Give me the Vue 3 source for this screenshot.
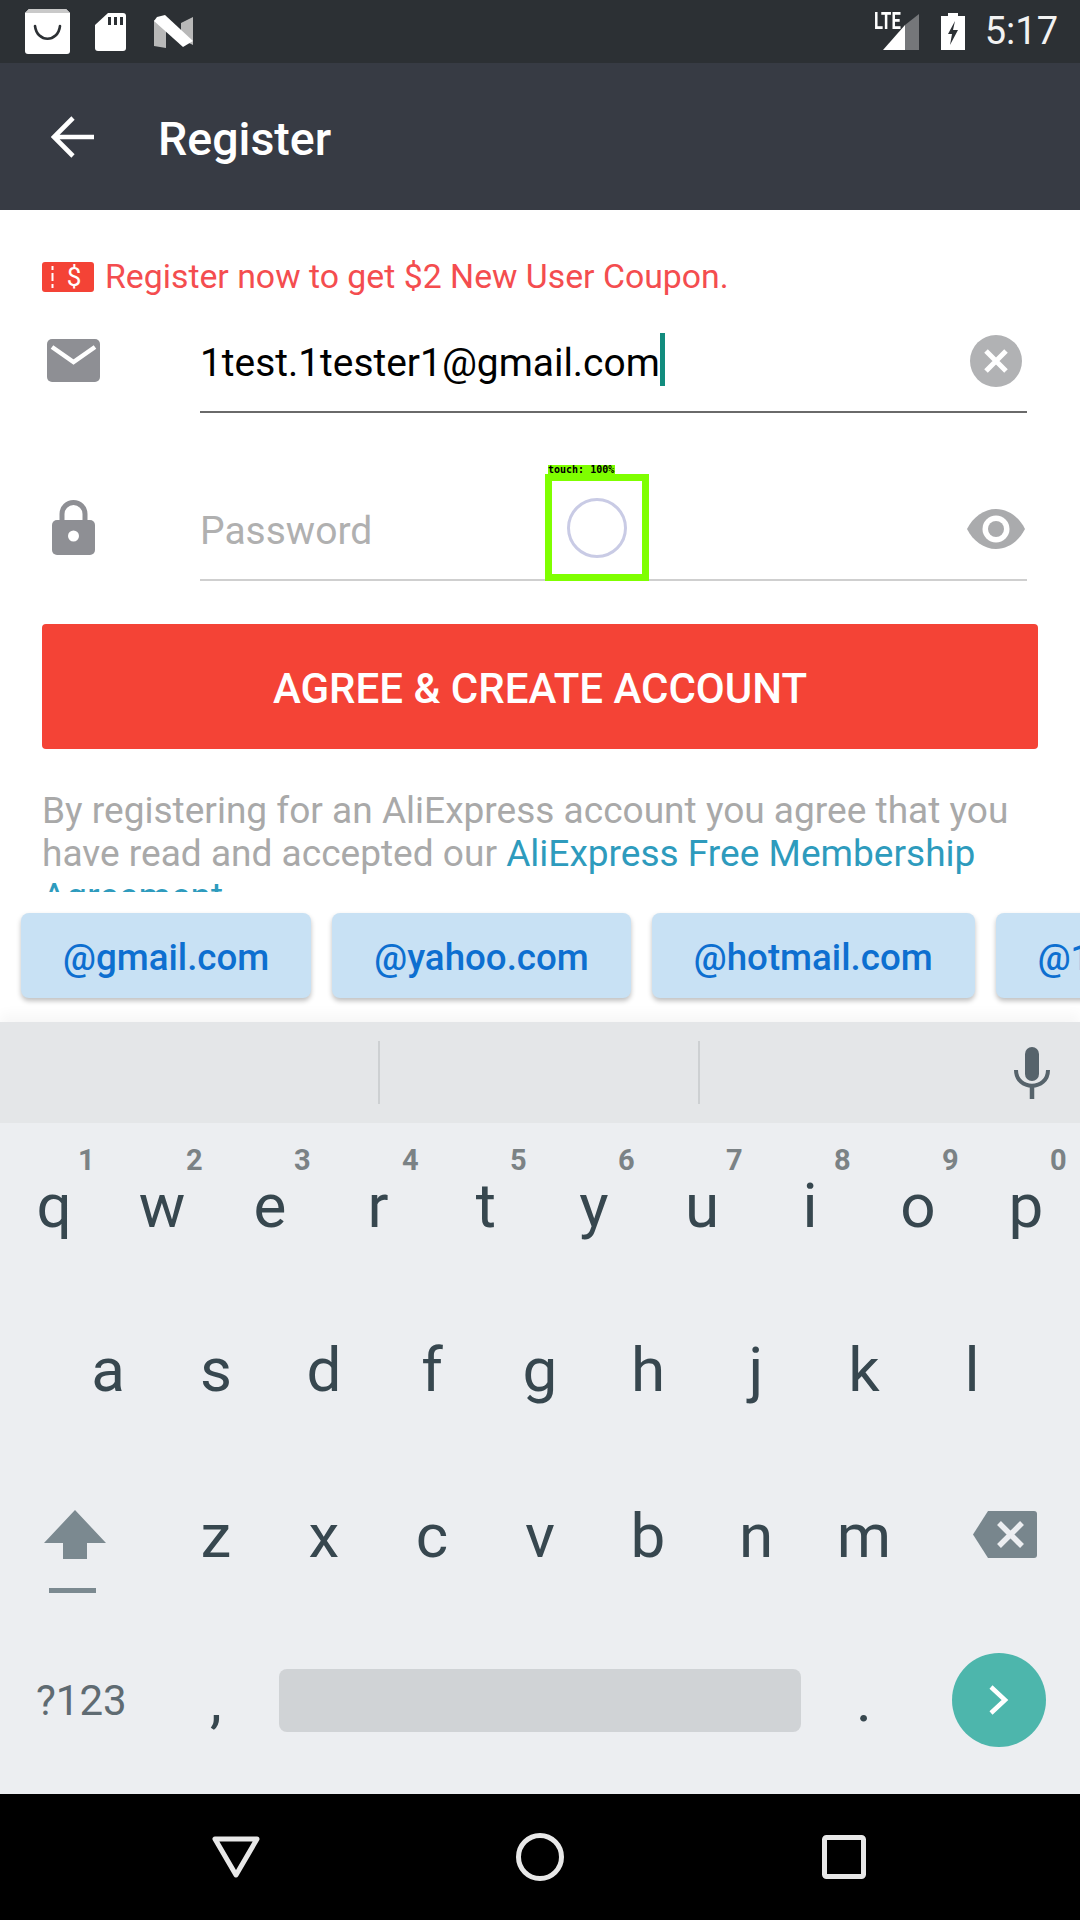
<script setup>
const rows = [
  [['q','1'],['w','2'],['e','3'],['r','4'],['t','5'],['y','6'],['u','7'],['i','8'],['o','9'],['p','0']],
  [['a'],['s'],['d'],['f'],['g'],['h'],['j'],['k'],['l']],
]
const row3 = ['z','x','c','v','b','n','m']
const chips = ['@gmail.com','@yahoo.com','@hotmail.com','@163.com']
</script>

<template>
  <div class="screen">
    <header class="status">
      <div class="status-left">
        <svg class="bag" width="45" height="45" viewBox="0 0 45 45"><path d="M4 0h37l4 4v38a3 3 0 0 1-3 3H3a3 3 0 0 1-3-3V4z" fill="#fff"/><path d="M4 0h37l4 4H0z" fill="#c9c9c9"/><path d="M10 17c2 17 23 17 25 0" fill="none" stroke="#2c3034" stroke-width="2.6" stroke-linecap="round"/></svg>
        <svg class="sd" width="31" height="38" viewBox="0 0 31 38"><path d="M13 0h15a3 3 0 0 1 3 3v32a3 3 0 0 1-3 3H3a3 3 0 0 1-3-3V12z" fill="#fff"/><path d="M13 4h3v8h-3zM19 4h3v8h-3zM25 4h3v8h-3z" fill="#2c3034"/></svg>
        <svg class="nlogo" width="39" height="33" viewBox="0 0 39 33"><path d="M0 5l12 8v20L0 31z" fill="#b8b8b8"/><path d="M27 8l12-6v28l-12-6z" fill="#b8b8b8"/><path d="M3 2L11 0l28 26-10 6L0 6z" fill="#fff"/></svg>
      </div>
      <div class="status-right">
        <div class="signal">
          <span class="lte">LTE</span>
          <svg width="36" height="36" viewBox="0 0 36 36"><path d="M36 0v36H22V11z" fill="#75777a"/><path d="M22 11v25H0z" fill="#fff"/></svg>
        </div>
        <svg class="battery" width="24" height="37" viewBox="0 0 24 37"><path d="M7 0h10v3h7v34H0V3h7z" fill="#fff"/><path d="M14 8l-7 13h4l-2 11 8-15h-5z" fill="#2c3034"/></svg>
        <span class="time">5:17</span>
      </div>
    </header>

    <div class="appbar">
      <svg class="back" width="44" height="44" viewBox="0 0 44 44"><path d="M43 22H3M22 3L3 22l19 19" fill="none" stroke="#fff" stroke-width="4.6"/></svg>
      <span class="title">Register</span>
    </div>

    <main class="content">
      <div class="coupon">
        <svg class="ticket" width="52" height="30" viewBox="0 0 52 30"><rect width="52" height="30" rx="3" fill="#f44336"/><path d="M10.500 4v4M10.500 11v8M10.500 22v4" stroke="#fff" stroke-width="2"/><text x="32" y="24" text-anchor="middle" class="ticket-t">$</text></svg>
        <span class="coupon-text">Register now to get $2 New User Coupon.</span>
      </div>

      <div class="form-row email-row">
        <svg class="row-icon" width="53" height="43" viewBox="0 0 53 43"><rect width="53" height="43" rx="5" fill="#8e8f94"/><path d="M5 8l21.500 15L48 8" fill="none" stroke="#fff" stroke-width="4.500"/></svg>
        <div class="field field-active">
          <span class="value">1test.1tester1@gmail.com</span><i class="cursor"></i>
          <svg class="field-icon clear" width="52" height="52" viewBox="0 0 52 52"><circle cx="26" cy="26" r="26" fill="#b1b2b4"/><path d="M16 16l20 20M36 16L16 36" stroke="#fff" stroke-width="5"/></svg>
        </div>
      </div>

      <div class="form-row password-row">
        <svg class="row-icon lock" width="43" height="55" viewBox="0 0 43 55"><path d="M10 24V14a11.500 11.500 0 0 1 23 0v10" fill="none" stroke="#8e8f94" stroke-width="5"/><rect y="20" width="43" height="35" rx="5" fill="#8e8f94"/><circle cx="21.500" cy="36" r="5.500" fill="#fff"/></svg>
        <div class="field">
          <span class="placeholder">Password</span>
          <svg class="field-icon eye" width="58" height="40" viewBox="0 0 58 40"><path d="M0 20C6 8 17 0 29 0s23 8 29 20c-6 12-17 20-29 20S6 32 0 20z" fill="#aaabad"/><circle cx="29" cy="20" r="13.500" fill="#fff"/><circle cx="29" cy="20" r="8" fill="#aaabad"/></svg>
          <div class="touch-box">
            <span class="touch-label">touch: 100%</span>
            <span class="touch-ring"></span>
          </div>
        </div>
      </div>

      <button class="cta">AGREE &amp; CREATE ACCOUNT</button>

      <p class="terms">By registering for an AliExpress account you agree that you have read and accepted our <a class="link">AliExpress Free Membership Agreement</a></p>

      <div class="chips">
        <span v-for="c in chips" :key="c" class="chip">{{ c }}</span>
      </div>
    </main>

    <section class="keyboard">
      <div class="suggest">
        <span class="slot"></span>
        <span class="slot slot-mid"></span>
        <span class="slot slot-mic">
          <svg width="38" height="52" viewBox="0 0 38 52"><rect x="12" y="0" width="14" height="34" rx="7" fill="#56636b"/><path d="M3 23c0 21 32 21 32 0" fill="none" stroke="#56636b" stroke-width="4"/><path d="M19 38v14" stroke="#56636b" stroke-width="4.500"/></svg>
        </span>
      </div>
      <div class="keys">
        <div v-for="(r, i) in rows" :key="i" class="key-row">
          <span v-for="k in r" :key="k[0]" class="key">
            {{ k[0] }}<sup v-if="k[1]" class="hint">{{ k[1] }}</sup>
          </span>
        </div>
        <div class="key-row row-three">
          <span class="key key-side">
            <svg class="shift" width="62" height="83" viewBox="0 0 62 83"><path d="M31 0l31 33H43v16H19V33H0z" fill="#7b8990"/><rect x="5" y="78" width="47" height="5" fill="#7b8990"/></svg>
          </span>
          <span v-for="k in row3" :key="k" class="key">{{ k }}</span>
          <span class="key key-side">
            <svg class="bksp" width="64" height="47" viewBox="0 0 64 47"><path d="M15 0h46a3 3 0 0 1 3 3v41a3 3 0 0 1-3 3H15L0 23.500z" fill="#78868d"/><path d="M26 12l23 23M49 12L26 35" stroke="#eceef1" stroke-width="5.500"/></svg>
          </span>
        </div>
        <div class="key-row bottom-row">
          <span class="key key-side sym">?123</span>
          <span class="key punct">,</span>
          <span class="space-slot"><span class="space"></span></span>
          <span class="key punct">.</span>
          <span class="key key-side">
            <span class="enter">
              <svg width="20" height="32" viewBox="0 0 20 32"><path d="M2 3l14 13L2 29" fill="none" stroke="#fff" stroke-width="4.500"/></svg>
            </span>
          </span>
        </div>
      </div>
    </section>

    <nav class="navbar">
      <svg width="48" height="42" viewBox="0 0 48 42"><path d="M3 3h42L24 39z" fill="none" stroke="#e8e8e8" stroke-width="5" stroke-linejoin="round"/></svg>
      <svg width="48" height="48" viewBox="0 0 48 48"><circle cx="24" cy="24" r="21.500" fill="none" stroke="#e8e8e8" stroke-width="5"/></svg>
      <svg class="recent" width="44" height="44" viewBox="0 0 44 44"><rect x="2.500" y="2.500" width="39" height="39" rx="2" fill="none" stroke="#e8e8e8" stroke-width="5"/></svg>
    </nav>
  </div>
</template>

<style>
html, body { margin: 0; padding: 0; background: #fff; }
</style>

<style scoped>
.screen {
  width: 1080px;
  height: 1920px;
  display: flex;
  flex-direction: column;
  overflow: hidden;
  background: #fff;
  font-family: Roboto, "Liberation Sans", sans-serif;
}
.status {
  height: 63px;
  flex: none;
  background: #2c3034;
  display: flex;
  align-items: center;
  justify-content: space-between;
  padding: 0 22px 0 25px;
  box-sizing: border-box;
}
.status-left { display: flex; align-items: center; }
.sd { margin-left: 25px; }
.nlogo { margin-left: 28px; }
.status-right { display: flex; align-items: center; }
.signal { position: relative; width: 45px; height: 36px; display: flex; justify-content: flex-end; }
.lte {
  position: absolute;
  left: 0;
  top: -6px;
  color: #fff;
  font: 700 23px Roboto, sans-serif;
  transform: scaleX(.72);
  transform-origin: left center;
}
.battery { margin-left: 22px; }
.time { margin-left: 20px; color: #f2f2f2; font-size: 38px; line-height: 63px; }

.appbar {
  height: 147px;
  flex: none;
  background: #373b44;
  display: flex;
  align-items: center;
  padding-left: 51px;
  box-sizing: border-box;
}
.title { margin: 5px 0 0 63px; color: #fff; font-size: 46.5px; font-weight: 500; }

.content { height: 812px; flex: none; padding-top: 40px; box-sizing: border-box; overflow: hidden; }
.coupon {
  height: 54px;
  display: flex;
  align-items: center;
  padding-left: 42px;
  color: #f44d4f;
  font-size: 33.8px;
  gap: 11px;
}
.coupon-text { margin-bottom: 2px; }
.ticket-t { fill: #fff; font: 400 26px Roboto, sans-serif; }

.form-row { display: flex; padding-left: 47px; align-items: center; }
.email-row { height: 109px; }
.password-row { height: 110px; margin-top: 58px; }
.row-icon { width: 53px; flex: none; margin-top: 4px; }
.lock { width: 43px; margin: 2px 5px 0; }
.field {
  position: relative;
  margin-left: 100px;
  width: 827px;
  height: 100%;
  box-sizing: border-box;
  border-bottom: 2px solid #cfcfcf;
  display: flex;
  align-items: center;
}
.field-active { border-bottom-color: #6a6a6a; }
.value { color: #000; font-size: 38.9px; margin-top: 9px; }
.cursor { width: 5px; height: 53px; background: #128c7e; margin-top: 4px; }
.placeholder { color: #b0b0b0; font-size: 39px; margin-top: 12px; }
.field-icon { position: absolute; }
.clear { left: 770px; top: 31px; }
.eye { left: 767px; top: 38px; }
.touch-box {
  position: absolute;
  left: 345px;
  top: 3px;
  width: 104px;
  height: 107px;
  box-sizing: border-box;
  border: 7px solid #7fff00;
  display: flex;
  align-items: center;
  justify-content: center;
}
.touch-label {
  position: absolute;
  left: -4px;
  top: -16px;
  width: 67px;
  height: 10px;
  background: #7fff00;
  color: #000;
  font: 700 10px/10px "DejaVu Sans Mono", monospace;
  white-space: nowrap;
  overflow: hidden;
}
.touch-ring {
  width: 60px;
  height: 60px;
  box-sizing: border-box;
  border-radius: 50%;
  border: 3px solid #c9cbe5;
  filter: blur(.7px);
}
.cta {
  display: block;
  margin: 43px 0 0 42px;
  width: 996px;
  height: 125px;
  background: #f44336;
  color: #fff;
  border: 0;
  border-radius: 4px;
  padding: 4px 0 0;
  font: 500 42px Roboto, sans-serif;
}
.terms {
  margin: 40px 0 0 42px;
  width: 996px;
  height: 103px;
  overflow: hidden;
  color: #a9a9a9;
  font-size: 37.05px;
  line-height: 43px;
}
.link { color: #2e9bbd; }
.chips {
  display: flex;
  gap: 21px;
  margin-top: 21px;
  padding-left: 21px;
  width: 1300px;
}
.chip {
  height: 85px;
  padding: 3px 42px 0;
  box-sizing: border-box;
  flex: none;
  display: flex;
  align-items: center;
  background: #c8e1f4;
  color: #0d6fd0;
  font-size: 36.7px;
  font-weight: 500;
  border-radius: 8px;
  box-shadow: 0 3px 5px rgba(0,0,0,.25);
}
.keyboard {
  flex: none;
  height: 772px;
  background: #eceef1;
  display: flex;
  flex-direction: column;
  box-shadow: 0 -8px 12px rgba(0,0,0,.035);
}
.suggest { height: 101px; flex: none; background: #e4e6e8; display: flex; align-items: center; }
.slot { height: 63px; width: 380px; box-sizing: border-box; border-right: 2px solid #cdd0d2; }
.slot-mid { width: 320px; }
.slot-mic {
  flex: 1;
  border: 0;
  display: flex;
  align-items: center;
  justify-content: flex-end;
  padding-right: 29px;
}
.keys { flex: 1; display: flex; flex-direction: column; }
.key-row { height: 164px; display: flex; justify-content: center; }
.row-three { margin-top: 2px; }
.bottom-row { margin-top: 1px; }
.key {
  position: relative;
  width: 108px;
  flex: none;
  display: flex;
  align-items: center;
  justify-content: center;
  color: #37474f;
  font-size: 62px;
}
.key-side { width: 162px; }
.shift { margin: 32px 12px 0 0; }
.bksp { margin: -1px 0 0 11px; }
.hint {
  position: absolute;
  left: 78px;
  top: 23px;
  font-size: 29px;
  font-weight: 700;
  line-height: 1;
  color: #7b8285;
}
.sym { font-size: 42px; color: #5f6b72; justify-content: flex-start; padding-left: 36px; box-sizing: border-box; }
.punct { font-size: 60px; }
.space-slot { width: 540px; flex: none; display: flex; align-items: center; justify-content: center; }
.space { width: 522px; height: 63px; background: #d0d3d6; border-radius: 8px; }
.enter {
  width: 94px;
  height: 94px;
  border-radius: 50%;
  background: #4db6ac;
  display: flex;
  align-items: center;
  justify-content: center;
}
.navbar {
  flex: none;
  height: 126px;
  background: #000;
  display: flex;
  align-items: center;
  padding-left: 212px;
  gap: 256px;
}
.recent { margin-left: 2px; }
</style>
